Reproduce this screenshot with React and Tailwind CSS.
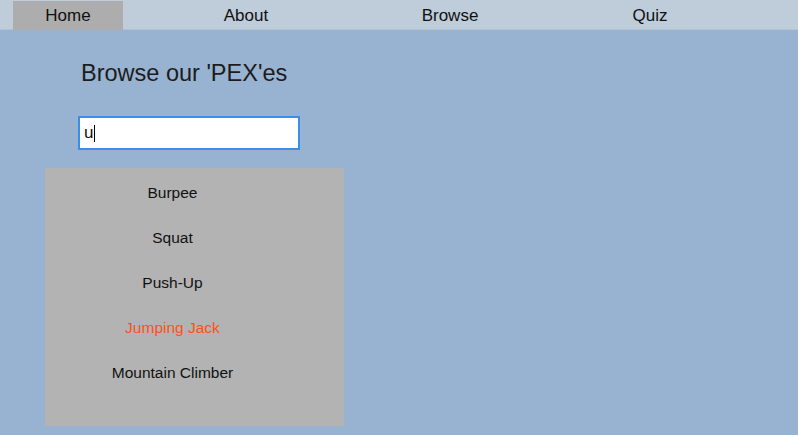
const tabs = [
  { label: "Home", w: "w-[110px]", active: true },
  { label: "About", w: "w-[246px]" },
  { label: "Browse", w: "w-[162px]" },
  { label: "Quiz", w: "w-[238px]" },
];

const pexes = [
  { name: "Burpee" },
  { name: "Squat" },
  { name: "Push-Up" },
  { name: "Jumping Jack", hover: true },
  { name: "Mountain Climber" },
];

export default function App() {
  return (
    <div className="w-[798px] h-[435px] bg-[#98b3d1] font-['Liberation_Sans',Arial,sans-serif] text-[#111] overflow-hidden">
      {/* Nav */}
      <nav className="h-[30px] bg-[#bfccda] flex pl-[13px] border-b border-[#b2c3d6]">
        {tabs.map((t) => (
          <div
            key={t.label}
            className={`${t.w} h-[29px] mt-[1px] flex items-center justify-center text-[17px] ${
              t.active ? "bg-[#adadad]" : ""
            }`}
          >
            {t.label}
          </div>
        ))}
      </nav>

      <div className="pl-[78px] pt-[31px]">
        <h1 className="text-[23.5px] leading-[24px] font-normal text-[#1c1c1c] ml-[3px]">
          Browse our 'PEX'es
        </h1>

        <div className="relative mt-[31px] w-[222px] h-[34px] bg-white border-2 border-[#3a8ee6]">
          <input
            readOnly
            value="u"
            className="w-full h-full pl-[4px] text-[17px] outline-none bg-transparent text-[#111]"
          />
          <span className="absolute left-[14px] top-[7px] w-[1px] h-[17px] bg-black" />
        </div>
      </div>

      {/* Results */}
      <div className="ml-[45px] mt-[18px] w-[299px] h-[258px] bg-[#b3b3b3] pt-[2px]">
        <ul className="w-[255px]">
          {pexes.map((p) => (
            <li
              key={p.name}
              className={`h-[45px] flex items-center justify-center text-[15.5px] ${
                p.hover ? "text-[#ff5019]" : "text-[#111]"
              }`}
            >
              {p.name}
            </li>
          ))}
        </ul>
      </div>
    </div>
  );
}
